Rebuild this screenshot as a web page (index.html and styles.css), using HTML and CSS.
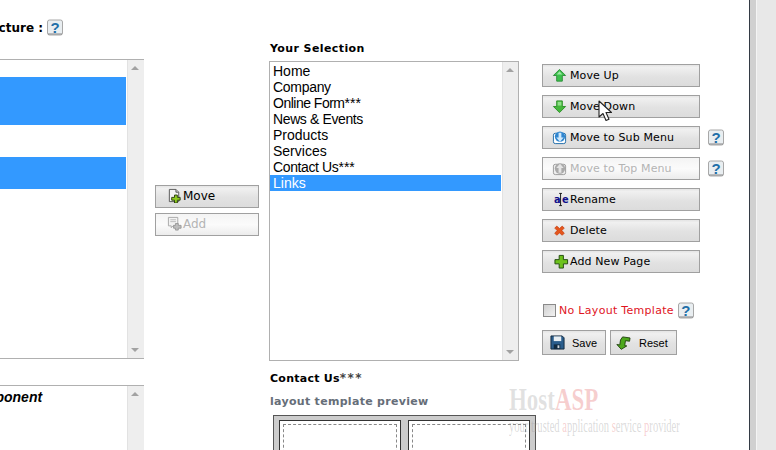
FILE: index.html
```html
<!DOCTYPE html>
<html lang="en">
<head>
<meta charset="utf-8">
<title>Menu Structure</title>
<link rel="stylesheet" href="styles.css">
</head>
<body>
<div class="window">
  <main class="content">
    <section class="col-structure">
      <h2 class="title-structure">Site Structure :
        <svg class="help" viewBox="0 0 16 16"><use href="#i-help"/></svg>
      </h2>
      <div class="listbox list-structure">
        <div class="rows">
          <div class="gap g18"></div>
          <div class="sel h48"></div>
          <div class="gap g32"></div>
          <div class="sel h32"></div>
        </div>
        <div class="sb"><span class="up"></span><span class="down"></span></div>
      </div>
      <div class="listbox list-component">
        <div class="rows"><div class="comp-title">Page Component</div></div>
        <div class="sb"><span class="up"></span></div>
      </div>
    </section>

    <section class="col-move">
      <button class="btn btn-move"><svg class="ic" viewBox="0 0 16 16"><path d="M2.5 1.5h7l3 3v10h-10z" fill="#f4f4f4" stroke="#555"/><path d="M9.5 1.5v3h3" fill="#ccc" stroke="#555"/><path d="M8 7.5h3v2.500h3v3h-3v3H8v-3H5v-3h3z" fill="#8fcc1e" stroke="#2a3d10"/></svg><span>Move</span></button>
      <button class="btn off btn-move"><svg class="ic" viewBox="0 0 16 16"><path d="M1.500 1.500h10v9h-5l-2 2v-2h-3z" fill="#f2f2f2" stroke="#a8a8a8"/><path d="M3.500 4h6M3.500 6h6" stroke="#bbb"/><path d="M9 8h3v2h3v3h-3v2H9v-2H7v-3h2z" fill="#bdbdbd" stroke="#999"/></svg><span>Add</span></button>
    </section>

    <section class="col-selection">
      <h2 class="title-selection">Your Selection</h2>
      <div class="listbox list-selection">
        <ul class="rows options">
          <li>Home</li>
          <li class="narrow-s">Company</li>
          <li><span class="narrow-l">Online Form</span>***</li>
          <li class="narrow">News &amp; Events</li>
          <li>Products</li>
          <li>Services</li>
          <li><span class="narrow">Contact Us</span>***</li>
          <li class="picked">Links</li>
        </ul>
        <div class="sb"><span class="up"></span><span class="down"></span></div>
      </div>
      <h3 class="current">Contact Us<span class="stars">***</span></h3>
      <h4 class="preview-title">layout template preview</h4>
      <div class="preview">
        <div class="pane"><div class="dash"></div></div>
        <div class="pane"><div class="dash"></div></div>
      </div>
    </section>

    <section class="col-actions">
      <div class="row"><button class="btn act"><svg class="ic" viewBox="0 0 16 16"><path d="M8 1.500 14.500 8H11v6H5V8H1.500z" fill="#3cc04c" stroke="#2d8f3a" stroke-linejoin="round"/><path d="M8 3.500 5 7h6z" fill="#9ce8a4"/></svg><span>Move Up</span></button></div>
      <div class="row"><button class="btn act"><svg class="ic" viewBox="0 0 16 16"><path d="M8 14.500 1.500 8H5V2h6v6h3.500z" fill="#45b83c" stroke="#2d8f2a" stroke-linejoin="round"/><path d="M6 3h4v4H6z" fill="#8fe088"/></svg><span>Move Down</span></button></div>
      <div class="row"><button class="btn act"><svg class="ic" viewBox="0 0 16 16"><rect x="1.500" y="3.500" width="13" height="11" rx="2" fill="#fff" stroke="#1b6aa8"/><circle cx="8.500" cy="7" r="5.500" fill="#2f86d0"/><path d="M8.500 12.500 4.500 8H7V3h3v5h2.500z" fill="#cfe8fb"/></svg><span>Move to Sub Menu</span></button><svg class="help" viewBox="0 0 16 16"><use href="#i-help"/></svg></div>
      <div class="row"><button class="btn act off"><svg class="ic" viewBox="0 0 16 16"><rect x="1.500" y="3.500" width="13" height="11" rx="2" fill="#eee" stroke="#999"/><circle cx="8.500" cy="8" r="5.500" fill="#aaa"/><path d="M8.500 3 12.500 7.500H10v5H7v-5H4.500z" fill="#e4e4e4"/></svg><span>Move to Top Menu</span></button><svg class="help" viewBox="0 0 16 16"><use href="#i-help"/></svg></div>
      <div class="row"><button class="btn act"><svg class="ic ic-shift" viewBox="0 0 16 16"><path d="M5.500 1.500h3M5.500 14.500h3M7 1.500v13" stroke="#111" fill="none"/><text x="0" y="12" class="ic-letter">a</text><text x="8.500" y="12" class="ic-letter">e</text></svg><span>Rename</span></button></div>
      <div class="row"><button class="btn act"><svg class="ic" viewBox="-3 -3 22 22"><path d="M4 1.500 8 5l4-3.500 3 3L11.500 8l3.500 4-3 3L8 11.500 4 15l-3-3 3.500-4L1 4.500z" fill="#e4561c" stroke="#c23c10" stroke-linejoin="round"/></svg><span>Delete</span></button></div>
      <div class="row"><button class="btn act"><svg class="ic ic-shift" viewBox="0 0 16 16"><path d="M5.500 1.500h4.500v4.500h4.500v4.500H10V15H5.500v-4.500H1V6h4.500z" fill="#6dc21c" stroke="#1f4a0a"/></svg><span>Add New Page</span></button></div>
      <label class="no-layout"><span class="check"></span><span class="no-layout-text">No Layout Template</span><svg class="help" viewBox="0 0 16 16"><use href="#i-help"/></svg></label>
      <div class="save-row">
        <button class="btn btn-save"><svg class="ic-lg" viewBox="0 0 16 16"><path d="M1 1h12l2 2v12H1z" fill="#2a5d8c" stroke="#12283c"/><rect x="4" y="1.500" width="8" height="5" fill="#e8eef2"/><rect x="4" y="10" width="7" height="5" fill="#102a40"/><rect x="8" y="11" width="2" height="3" fill="#cfd8e0"/></svg><span>Save</span></button>
        <button class="btn btn-reset"><svg class="ic-lg" viewBox="0 0 18 16"><path d="M7 1.500h9v4H11v6h2.500l-6 5-6-5H5v-6z" transform="rotate(8 9 8)" fill="#4da81c" stroke="#1c3d0a" stroke-linejoin="round"/></svg><span>Reset</span></button>
      </div>
    </section>
  </main>
  <div class="page-scroll"><div class="track"></div><div class="shine"></div><div class="thumb"></div></div>

  <div class="mark">
    <div class="mark-logo">Host<span class="red">ASP</span></div>
    <div class="mark-tag">your trusted <span class="red">a</span>pplication <span class="red">s</span>ervice <span class="red">p</span>rovider</div>
  </div>
  <svg class="cursor" viewBox="0 0 14 22"><path d="M1 1v16l4-3.500 3 7 3-1.300-3-6.700h5.500z" fill="#fff" stroke="#222" stroke-width="1.100" stroke-linejoin="round"/></svg>
</div>
<svg class="defs" width="0" height="0"><defs>
  <g id="i-help">
    <rect x="0.500" y="0.500" width="15" height="15" rx="2" fill="#e9eef1" stroke="#a8a8a8"/>
    <path d="M1 14.500h14" stroke="#888"/>
    <text x="8" y="13" class="help-mark">?</text>
  </g>
</defs></svg>
</body>
</html>
```

FILE: styles.css
```css
* { box-sizing: border-box; }
html, body { margin: 0; padding: 0; height: 100%; overflow: hidden; background: #fff; }
body { font-family: "DejaVu Sans", Verdana, sans-serif; color: #000; }

.window { position: relative; width: 776px; height: 450px; display: flex; overflow: hidden; }
.content { width: 749px; height: 450px; display: flex; align-items: flex-start; overflow: hidden; flex: none; }

.defs { position: absolute; }
.help-mark { font: bold 15px "Liberation Sans", sans-serif; fill: #1f6ea8; text-anchor: middle; }
.help { width: 16px; height: 17px; flex: none; }
.ic-letter { font: bold 10.500px "DejaVu Sans", sans-serif; fill: #10108a; }

/* left column, clipped by the window edge */
.col-structure { width: 144px; flex: none; margin-left: 0; padding-top: 19px; position: relative; overflow: hidden; }
.title-structure { margin: 0 0 23px; height: 17px; display: flex; justify-content: flex-end; align-items: center; gap: 4px; padding-right: 81px; font-size: 12px; font-weight: bold; white-space: nowrap; }
.list-structure { height: 300px; width: 145px; margin-bottom: 26px; }
.list-component { height: 100px; width: 145px; }
.comp-title { font: italic bold 14px "Liberation Sans", sans-serif; padding-top: 3px; margin-left: -73px; white-space: nowrap; }

.listbox { display: flex; border: 1px solid #b0b0b0; background: #fff; }
.col-structure .listbox { border-left: 0; }
.rows { flex: 1; min-width: 0; margin: 0; padding: 0; list-style: none; }
.sb { position: relative; width: 17px; flex: none; background: #eeeeee; border-left: 1px solid #e2e2e2; margin-left: 1px; }
.up, .down { position: absolute; left: 3px; width: 0; height: 0; border-left: 4px solid transparent; border-right: 4px solid transparent; }
.up { top: 6px; border-bottom: 4px solid #a2a2a2; }
.down { bottom: 6px; border-top: 4px solid #a2a2a2; }
.g18 { height: 17px; }
.g32 { height: 32px; }
.h48 { height: 48px; }
.h32 { height: 32px; }
.sel { background: #3399ff; }

/* middle */
.col-move { width: 104px; flex: none; margin-left: 11px; padding-top: 185px; display: flex; flex-direction: column; gap: 5px; }

.btn { display: flex; align-items: center; padding: 0; height: 23px; border: 1px solid #a0a0a0; outline: 0; background: linear-gradient(#e4e4e4, #f0f0f0 12%, #e2e2e2 55%, #dcdcdc); font: 11px "DejaVu Sans", Verdana, sans-serif; color: #000; text-align: left; }
.btn.off { background: linear-gradient(#f4f4f4, #fbfbfb 50%, #ececec); color: #b4b4b4; }
.ic { width: 15px; height: 15px; flex: none; }
.ic-lg { width: 15px; height: 15px; flex: none; }
.ic-shift { margin-left: 2px; margin-right: -2px; }
.btn-move { width: 104px; padding: 0 0 2px 11px; gap: 1px; font-size: 12px; }

/* selection */
.col-selection { width: 270px; flex: none; margin-left: 10px; padding-top: 42px; }
.title-selection { margin: 0 0 5px 1px; height: 14px; font-size: 11px; line-height: 14px; font-weight: bold; white-space: nowrap; letter-spacing: .4px; }
.list-selection { width: 250px; height: 300px; }
.list-selection .sb { width: 16px; }
.options { padding-top: 1px; font: 14px/16px "Liberation Sans", Arial, sans-serif; }
.options li { padding-left: 3px; height: 16px; white-space: nowrap; }
.narrow-s { letter-spacing: -.3px; }
.narrow { letter-spacing: -.38px; }
.narrow-l { letter-spacing: -.5px; }
.picked { background: #3399ff; color: #fff; }
.current { margin: 10px 0 0 1px; height: 14px; font-size: 11px; line-height: 14px; font-weight: bold; letter-spacing: .25px; }
.stars { color: #444; font-size: 12px; letter-spacing: 1.5px; }
.preview-title { margin: 10px 0 0 1px; height: 14px; font-size: 11px; line-height: 14px; font-weight: bold; color: #666e78; letter-spacing: .3px; }
.preview { margin: 6px 0 0 4px; width: 263px; height: 60px; padding: 4px 5px 0; display: flex; gap: 7px; background: #cccccc; border: 1px solid #555; border-bottom: 0; }
.pane { width: 122px; height: 60px; padding: 3px; background: #fff; border: 1px solid #333; flex: none; }
.dash { height: 60px; border: 1px dashed #888; }

/* actions */
.col-actions { width: 182px; flex: none; margin-left: 3px; padding-top: 64px; display: flex; flex-direction: column; }
.row { display: flex; align-items: center; gap: 8px; height: 23px; margin-bottom: 8px; }
.act { width: 158px; padding-left: 9px; gap: 3px; letter-spacing: .12px; }
.no-layout { display: flex; align-items: center; margin: 21px 0 0 1px; height: 17px; font-size: 11px; letter-spacing: .3px; color: #e0141e; gap: 3px; white-space: nowrap; }
.no-layout .help { margin-left: 1px; }
.check { width: 13px; height: 13px; border: 1px solid #8a8a8a; background: linear-gradient(135deg, #d0d0d0, #f2f2f2); flex: none; }
.save-row { display: flex; gap: 4px; margin-top: 11px; }
.btn-save { width: 64px; height: 25px; padding-left: 7px; gap: 7px; font: 11px "Liberation Sans", Arial, sans-serif; }
.btn-reset { width: 67px; height: 25px; padding-left: 5px; gap: 8px; font: 11px "Liberation Sans", Arial, sans-serif; }

/* browser scrollbar */
.page-scroll { flex: 1; display: flex; height: 450px; border-left: 1px solid #333a44; }
.track { width: 6px; background: #d0d0d0; }
.shine { width: 1px; background: #f4f4f4; }
.thumb { flex: 1; background: #e8e8e8; }

/* overlays */
.mark { position: absolute; left: 509px; top: 383px; width: 174px; pointer-events: none; }
.mark-logo { font: bold 31px/34px "Liberation Serif", serif; color: rgba(150,150,150,.28); transform: scaleX(.74); transform-origin: left top; white-space: nowrap; }
.mark-tag { font: 18px/18px "Liberation Serif", serif; color: rgba(150,150,150,.35); transform: scaleX(.585); transform-origin: left top; white-space: nowrap; }
.red { color: rgba(220,60,60,.25); }
.cursor { position: absolute; left: 598px; top: 100px; width: 14px; height: 22px; }
```
